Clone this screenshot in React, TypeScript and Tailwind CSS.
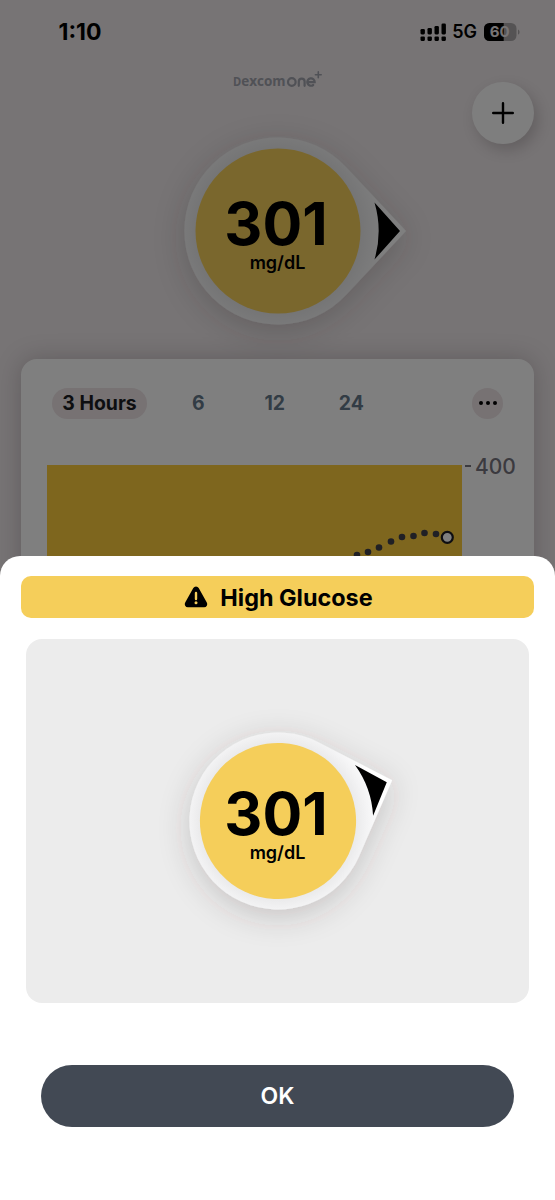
import React from 'react';

type GaugeProps = {
  id: string;
  value: number;
  scale: number;
  angle: number;
};

const TABS = ['6', '12', '24'];

const READINGS = [
  [357, 555], [368, 552], [379, 547.5], [391, 541.5], [402, 537],
  [413.5, 536], [424.5, 533], [436, 534],
];

function SignalIcon() {
  const bars = [28, 27, 25, 22.5];
  return (
    <svg width="26" height="18" viewBox="420 22 26 18">
      {bars.map((top, i) => (
        <g key={top}>
          <rect x={420.5 + i * 7} y={top} width="4.4" height={33.4 - top} rx="1.3" />
          <rect x={420.5 + i * 7} y="35.5" width="4.4" height="4.4" rx="1.1" />
        </g>
      ))}
    </svg>
  );
}

function BatteryIcon() {
  return (
    <svg width="36" height="18" viewBox="0 0 36 18" className="font-[Inter,sans-serif]">
      <defs>
        <clipPath id="battery">
          <rect width="32.5" height="18" rx="5.5" />
        </clipPath>
      </defs>
      <g clipPath="url(#battery)">
        <rect width="33" height="18" fill="#aba7a8" />
        <rect width="19.7" height="18" fill="#000" />
      </g>
      <path d="M34 6.4c2 .8 2 4.4 0 5.2z" fill="#aba7a8" />
      <text x="15.8" y="14.4" textAnchor="middle" fontSize="15" fontWeight="700" fill="#eee8ea">60</text>
    </svg>
  );
}

function Logo() {
  return (
    <svg width="92" height="22" viewBox="0 0 92 22" fill="#a0a2ac" className="font-[Open_Sans,sans-serif]">
      <text x="1" y="16.5" fontSize="14" fontWeight="700" textLength="52.5" lengthAdjust="spacingAndGlyphs">
        <tspan fontSize="11.5">D</tspan>excom
      </text>
      <g fill="none" stroke="#a0a2ac" strokeWidth="2.2" strokeLinecap="round">
        <circle cx="59.8" cy="13" r="3.8" />
        <path d="M66.8 16.8v-4.2a2.9 2.9 0 0 1 5.8 0v4.2" />
        <path d="M75.7 13.2h7a3.7 3.7 0 1 0-1.5 2.8" />
        <path d="M86.3 2.9v5.8M83.4 5.8h5.8" strokeWidth="1.6" />
      </g>
    </svg>
  );
}

function Gauge({ id, value, scale, angle }: GaugeProps) {
  return (
    <div className="relative flex h-[260px] w-[300px] flex-col items-center justify-center">
      <svg className="absolute inset-0 overflow-visible" width="300" height="260" viewBox="-150 -130 300 260">
        <defs>
          <radialGradient id={`${id}-ring`} gradientUnits="userSpaceOnUse" cx="0" cy="0" r="128">
            <stop offset="0.64" stopColor="#eaeaeb" />
            <stop offset="0.73" stopColor="#f3f3f4" />
            <stop offset="0.86" stopColor="#ffffff" />
          </radialGradient>
          <filter id={`${id}-shadow`} x="-40%" y="-40%" width="180%" height="180%">
            <feDropShadow dx="0" dy="7" stdDeviation="15" floodColor="#3c2d32" floodOpacity="0.22" />
          </filter>
        </defs>
        <g filter={`url(#${id}-shadow)`}>
          <g transform={`rotate(${angle}) scale(${scale})`}>
            <path d="M68 -64.1L128 0L68 64.1A93.5 93.5 0 1 1 68 -64.1Z" fill={`url(#${id}-ring)`} />
          </g>
        </g>
        <g transform={`rotate(${angle}) scale(${scale})`}>
          <circle r="82.5" fill="#f5ce5a" />
          <path d="M96.5 -28.5L122 0L96.5 28.5A101 101 0 0 0 96.5 -28.5Z" fill="#000" />
        </g>
      </svg>
      <span className="relative mt-[3px] mr-[3px] text-[59px] leading-[60px] font-bold">{value}</span>
      <span className="relative text-[18px] leading-[18px] font-semibold">mg/dL</span>
    </div>
  );
}

function StatusBar() {
  return (
    <div className="flex h-[62px] items-center justify-between pt-[2px] pr-[35px] pl-[58.5px]">
      <span className="text-[23px] font-bold">1:10</span>
      <div className="flex items-center gap-[7px]">
        <SignalIcon />
        <span className="-ml-px text-[18px] leading-[18px] font-semibold">5G</span>
        <BatteryIcon />
      </div>
    </div>
  );
}

function ChartCard() {
  return (
    <div className="mx-[21px] mt-[-2px] h-[300px] rounded-[16px] bg-white shadow-[0_0_24px_rgba(60,45,50,0.25)]">
      <div className="flex h-[60px] items-start pt-[28.5px] pr-[31px] pl-[31px] text-[19.4px] leading-[31px] font-bold">
        <span className="h-[31px] w-[95px] rounded-full bg-[#eee4e7] text-center text-[#1b1d22]">3 Hours</span>
        <div className="ml-[13px] flex text-[#64798a]">
          {TABS.map((tab) => (
            <span key={tab} className="w-[76.5px] text-center">{tab}</span>
          ))}
        </div>
        <div className="ml-auto flex h-[31px] w-[31px] items-center justify-center gap-[3px] rounded-full bg-[#eee4e7]">
          <i className="h-1 w-1 rounded-full bg-black" />
          <i className="h-1 w-1 rounded-full bg-black" />
          <i className="h-1 w-1 rounded-full bg-black" />
        </div>
      </div>
      <div className="mt-[46px] flex items-start pl-[26px]">
        <svg width="415" height="110" viewBox="47 465 415 110">
          <rect x="47" y="465" width="415" height="110" fill="#fccc3c" />
          {READINGS.map(([x, y]) => (
            <circle key={x} cx={x} cy={y} r="3.3" fill="#40404a" />
          ))}
          <circle cx="447.3" cy="537.3" r="5.5" fill="#fff" stroke="#1c1c24" strokeWidth="2.2" />
        </svg>
        <i className="ml-[3px] h-[2px] w-[6px] bg-[#77747f]" />
        <span className="mt-[-11px] ml-[4px] text-[21px] leading-[26px] font-medium text-[#77747f]">400</span>
      </div>
    </div>
  );
}

function AlertSheet() {
  return (
    <div className="absolute inset-x-0 bottom-0 flex h-[644px] flex-col rounded-t-[20px] bg-white">
      <div className="mx-[21px] mt-[20px] flex h-[42px] items-center justify-center gap-[12px] rounded-[10px] bg-[#f5ce5a] pl-[2px]">
        <svg width="24" height="22" viewBox="0 0 24 22">
          <path d="M9.3 2.1a3.1 3.1 0 0 1 5.4 0l8.1 14.4a3.1 3.1 0 0 1-2.7 4.7H3.9a3.1 3.1 0 0 1-2.7-4.7z" />
          <path d="M12 7v6" stroke="#f5ce5a" strokeWidth="2.4" strokeLinecap="round" />
          <circle cx="12" cy="16.8" r="1.5" fill="#f5ce5a" />
        </svg>
        <h1 className="pt-px text-[23.4px] font-bold">High Glucose</h1>
      </div>
      <div className="mx-[26px] mt-[21px] flex h-[364px] items-center justify-center rounded-[16px] bg-[#ececec]">
        <Gauge id="alert" value={301} scale={0.9465} angle={-19.6} />
      </div>
      <button className="mx-[41px] mt-[62px] h-[62px] rounded-full bg-[#424954] pt-px text-[23px] font-semibold text-white">
        OK
      </button>
    </div>
  );
}

export default function App() {
  return (
    <div className="relative h-[1200px] w-[555px] overflow-hidden bg-[#eee8ea] font-[Inter,sans-serif] text-black">
      <StatusBar />
      <div className="flex h-[39px] justify-center pt-[7px]">
        <Logo />
      </div>
      <button className="absolute top-[82px] left-[472px] flex h-[62px] w-[62px] items-center justify-center rounded-full bg-[#fdfdfd] shadow-[4px_6px_14px_rgba(60,45,50,0.22)]">
        <svg width="22" height="22" viewBox="0 0 22 22" stroke="#000" strokeWidth="2.4" strokeLinecap="round">
          <path d="M11 1.2v19.6M1.2 11h19.6" />
        </svg>
      </button>
      <div className="flex justify-center">
        <Gauge id="current" value={301} scale={1} angle={0} />
      </div>
      <ChartCard />
      <div className="absolute inset-0 bg-black/50" />
      <AlertSheet />
    </div>
  );
}
